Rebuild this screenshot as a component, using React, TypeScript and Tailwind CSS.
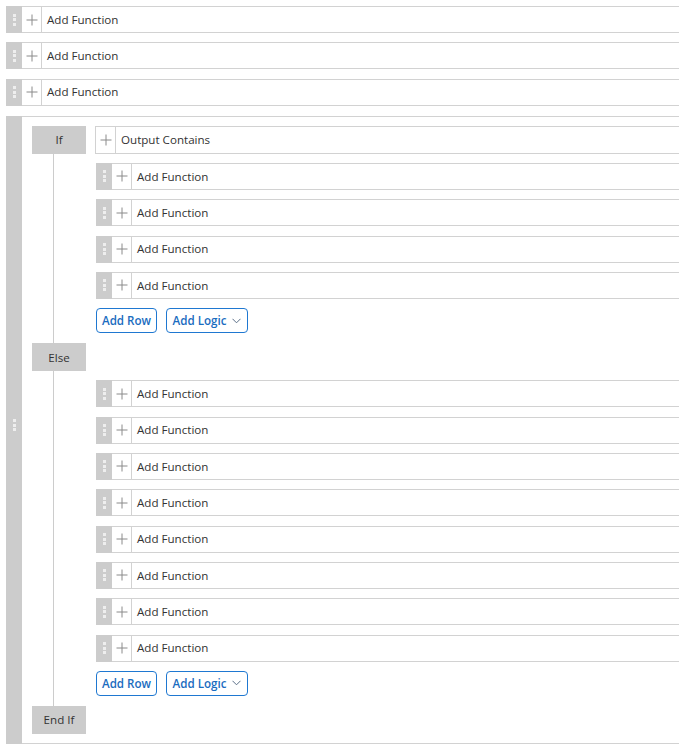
const font = { fontFamily: '"Open Sans", "Liberation Sans", sans-serif' };

const Dots = () => (
  <div className="flex flex-col items-center gap-[1.5px]">
    <span className="h-[3px] w-[3px] bg-[#eeeeee]" />
    <span className="h-[3px] w-[3px] bg-[#eeeeee]" />
    <span className="h-[3px] w-[3px] bg-[#eeeeee]" />
  </div>
);

const Plus = () => (
  <svg width="12" height="12" viewBox="0 0 12 12">
    <path d="M6 0.5V11.5M0.5 6H11.5" stroke="#8a8a8a" strokeWidth="1" fill="none" />
  </svg>
);

const FunctionRow = ({ label = "Add Function" }: { label?: string }) => (
  <div className="flex h-[27px]">
    <div className="flex w-4 shrink-0 items-center justify-center bg-[#cccccc]">
      <Dots />
    </div>
    <div className="flex flex-1 items-center border-y border-[#d2d2d2]">
      <div className="flex h-full w-5 items-center justify-center border-r border-[#d2d2d2]">
        <Plus />
      </div>
      <span className="pl-[5px] text-[11.6px] text-[#333333]">{label}</span>
    </div>
  </div>
);

const ConditionRow = ({ label }: { label: string }) => (
  <div className="flex h-[28px] items-center border border-r-0 border-[#d2d2d2]">
    <div className="flex h-full w-[20px] items-center justify-center border-r border-[#d2d2d2]">
      <Plus />
    </div>
    <span className="pl-[5px] text-[11.6px] text-[#333333]">{label}</span>
  </div>
);

const Buttons = () => (
  <div className="flex gap-[9px] pl-px">
    <button className="h-[25px] w-[61px] rounded-[4px] border border-[#1f78d1] text-[11.6px] font-semibold text-[#1a6cc0]">
      Add Row
    </button>
    <button className="flex h-[25px] w-[82px] items-center justify-center gap-[6px] rounded-[4px] border border-[#1f78d1] text-[11.6px] font-semibold text-[#1a6cc0]">
      Add Logic
      <svg width="9" height="6" viewBox="0 0 9 6">
        <path d="M0.5 0.8L4.5 4.8L8.5 0.8" stroke="#5b6f88" strokeWidth="1" fill="none" />
      </svg>
    </button>
  </div>
);

const Label = ({ text }: { text: string }) => (
  <div className="flex h-[28px] w-[54px] shrink-0 items-center justify-center bg-[#cccccc] text-[11.6px] text-[#333333]">
    {text}
  </div>
);

const App = () => {
  return (
    <div className="flex w-[679px] flex-col bg-white pl-[6px] pt-[6px]" style={font}>
      <div className="flex flex-col gap-[9.33px]">
        <FunctionRow />
        <FunctionRow />
        <FunctionRow />
      </div>

      <div className="mt-[10px] flex h-[628px]">
        <div className="flex w-4 shrink-0 items-center justify-center bg-[#cccccc] pb-[9px]">
          <Dots />
        </div>
        <div className="flex flex-1 flex-col border-y border-[#d2d2d2] pl-[10px] pt-[9px]">
          {/* If */}
          <div className="flex gap-[9px]">
            <div className="flex w-[54px] flex-col">
              <Label text="If" />
              <div className="ml-[21px] w-px flex-1 bg-[#cccccc]" />
            </div>
            <div className="flex flex-1 flex-col gap-[9.33px] pb-[10px]">
              <ConditionRow label="Output Contains" />
              <div className="ml-px flex flex-col gap-[9.33px]">
                <FunctionRow />
                <FunctionRow />
                <FunctionRow />
                <FunctionRow />
              </div>
              <Buttons />
            </div>
          </div>

          {/* Else */}
          <div className="flex gap-[9px]">
            <div className="flex w-[54px] flex-col">
              <Label text="Else" />
              <div className="ml-[21px] w-px flex-1 bg-[#cccccc]" />
            </div>
            <div className="flex flex-1 flex-col gap-[9.33px] pb-[10px] pt-[37px]">
              <div className="ml-px flex flex-col gap-[9.33px]">
                <FunctionRow />
                <FunctionRow />
                <FunctionRow />
                <FunctionRow />
                <FunctionRow />
                <FunctionRow />
                <FunctionRow />
                <FunctionRow />
              </div>
              <Buttons />
            </div>
          </div>

          {/* End If */}
          <Label text="End If" />
        </div>
      </div>
    </div>
  );
};

export default App;
